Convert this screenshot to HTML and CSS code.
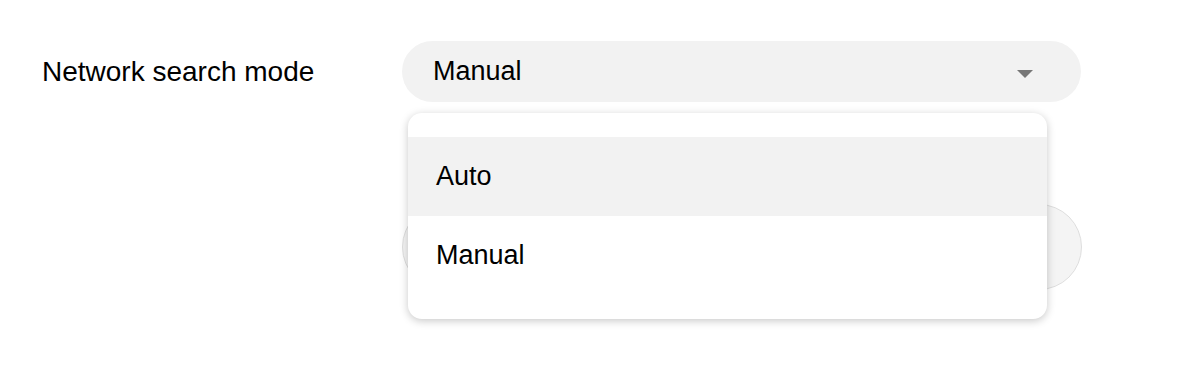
FILE: index.html
```html
<!DOCTYPE html>
<html lang="en">
    <head>
        <meta name="viewport" content="width=device-width, initial-scale=1.0">
        <title>Network settings</title>
        <link rel="stylesheet" href="styles.css">
    </head>
    <body>
        <div class="settings">
            <div class="settings__row">
                <div class="settings__label">Network search mode</div>
                <div class="select">
                    <span class="select__value">Manual</span>
                    <span class="select__arrow"></span>
                    <ul class="select__menu">
                        <li class="select__option is-hovered">Auto</li>
                        <li class="select__option">Manual</li>
                    </ul>
                </div>
            </div>
            <div class="settings__row settings__row--next">
                <div class="settings__label"></div>
                <div class="field"></div>
            </div>
        </div>
    </body>
</html>
```

FILE: styles.css
```css
body {
    margin: 0;
    min-height: 380px;
    font-family: "Liberation Sans", Arial, sans-serif;
    color: #000;
    background: #fff;
}
.settings {
    padding: 41px 0 90px 42px;
}
.settings__row {
    display: flex;
    align-items: center;
}
.settings__row--next {
    margin-top: 102px;
}
.settings__label {
    width: 360px;
    font-size: 28px;
}
.select {
    position: relative;
    width: 679px;
    height: 61px;
    box-sizing: border-box;
    padding: 0 48px 0 31px;
    border-radius: 31px;
    background-color: #f2f2f2;
    display: flex;
    align-items: center;
    justify-content: space-between;
    font-size: 27px;
}
.select__arrow {
    width: 0;
    height: 0;
    margin-top: 4px;
    border-left: 8px solid transparent;
    border-right: 8px solid transparent;
    border-top: 8px solid #777;
}
.select__menu {
    position: absolute;
    top: 72px;
    left: 6px;
    z-index: 2;
    width: 639px;
    margin: 0;
    padding: 24px 0;
    list-style: none;
    background: #fff;
    border-radius: 14px;
    box-shadow: 0 2px 8px rgba(0, 0, 0, 0.22);
}
.select__option {
    height: 79px;
    padding-left: 28px;
    display: flex;
    align-items: center;
}
.select__option.is-hovered {
    background-color: #f2f2f2;
}
.field {
    width: 680px;
    height: 86px;
    box-sizing: border-box;
    border: 1px solid #dedede;
    border-radius: 43px;
    background-color: #f4f4f4;
}
```
